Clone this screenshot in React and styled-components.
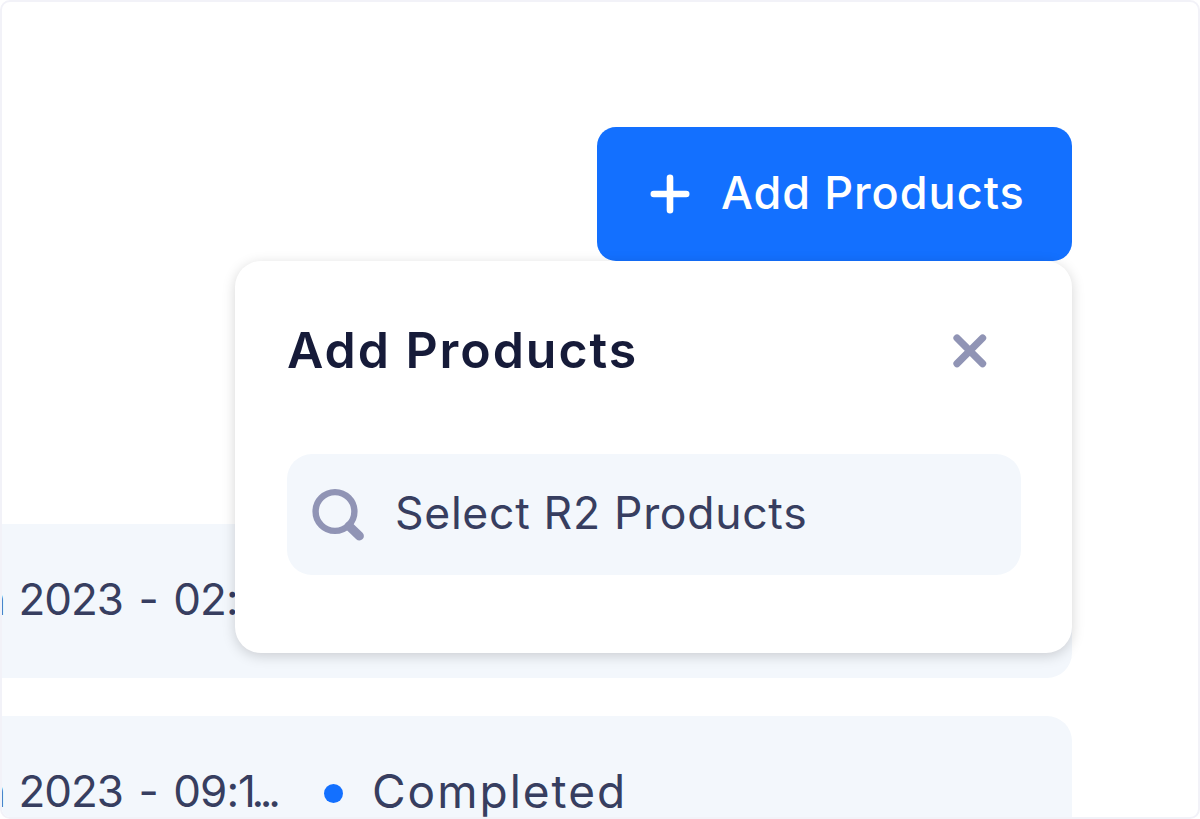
import React, { useState } from 'react'
import styled, { createGlobalStyle } from 'styled-components'

const App = () => {
  // HOOKS
  const [open, setOpen] = useState(true)

  // RETURN
  return (
    <Frame>
      <GlobalStyle />
      <Toolbar>
        <Anchor>
          <AddButton type="button" onClick={() => setOpen(!open)}>
            <svg width="40" height="40" viewBox="0 0 40 40" fill="none">
              <path d="M20 3.8V36.2M3.8 20H36.2" stroke="#fff" strokeWidth="6.6" strokeLinecap="round" />
            </svg>
            <ButtonText>Add Products</ButtonText>
          </AddButton>
          {open && (
            <Popover>
              <PopoverHeader>
                <Title>Add Products</Title>
                <CloseButton type="button" aria-label="Close" onClick={() => setOpen(false)}>
                  <svg width="34" height="34" viewBox="0 0 34 34" fill="none">
                    <path d="M4 4L29.6 29.6M29.6 4L4 29.6" stroke="#9094b5" strokeWidth="7.2" strokeLinecap="round" />
                  </svg>
                </CloseButton>
              </PopoverHeader>
              <SearchField>
                <svg width="54" height="54" viewBox="0 0 54 54" fill="none">
                  <circle cx="24" cy="23.5" r="19.4" stroke="#9094b5" strokeWidth="6.4" />
                  <path d="M38 38L48.4 48" stroke="#9094b5" strokeWidth="9" strokeLinecap="round" />
                </svg>
                <Placeholder>Select R2 Products</Placeholder>
              </SearchField>
            </Popover>
          )}
        </Anchor>
      </Toolbar>
      <List>
        <Row>
          <DateCell><Month>n </Month>2023 - 02:</DateCell>
        </Row>
        <Row>
          <DateCell><Month>n </Month>2023 - 09:<Cut>1...</Cut></DateCell>
          <Dot />
          <Status>Completed</Status>
        </Row>
      </List>
    </Frame>
  )
}

const GlobalStyle = createGlobalStyle`
  * {
    box-sizing: border-box;
  }
  body {
    margin: 0;
    background: #fff;
    font-family: 'Inter', sans-serif;
  }
`
const Frame = styled.main`
  width: 1200px;
  height: 819px;
  border: 2px solid #f2f2f8;
  border-radius: 10px;
  background: #fff;
  overflow: hidden;
`
const Toolbar = styled.header`
  display: flex;
  justify-content: flex-end;
  align-items: flex-start;
  height: 522px;
  padding: 125px 126px 0 0;
`
const Anchor = styled.div`
  position: relative;
`
const AddButton = styled.button`
  display: flex;
  align-items: center;
  width: 475px;
  height: 134px;
  padding: 0 0 0 53px;
  border: 0;
  border-radius: 19px;
  background: #1370ff;
  color: #fff;
  font-family: inherit;
  cursor: pointer;
`
const ButtonText = styled.span`
  margin-left: 31px;
  padding-bottom: 4px;
  font-size: 45px;
  font-weight: 500;
  letter-spacing: 1px;
  white-space: nowrap;
`
const Popover = styled.section`
  position: absolute;
  top: 100%;
  right: 0;
  z-index: 1;
  width: 837px;
  height: 392px;
  padding: 56px 51px 0 52px;
  border-radius: 26px;
  background: #fff;
  box-shadow: 0 3px 13px rgba(0, 0, 0, 0.17);
`
const PopoverHeader = styled.div`
  display: flex;
  justify-content: space-between;
  align-items: center;
  height: 68px;
  padding-right: 34px;
`
const Title = styled.h2`
  margin: 0;
  padding-bottom: 2px;
  color: #161b39;
  font-size: 50px;
  font-weight: 600;
  letter-spacing: 1.95px;
  line-height: 66px;
`
const CloseButton = styled.button`
  display: flex;
  padding: 0;
  border: 0;
  background: none;
  cursor: pointer;
`
const SearchField = styled.div`
  display: flex;
  align-items: center;
  height: 121px;
  margin-top: 69px;
  padding-left: 24px;
  border-radius: 25px;
  background: #f3f7fc;
`
const Placeholder = styled.span`
  margin-left: 30px;
  padding-bottom: 4px;
  color: #373e60;
  font-size: 44.5px;
  font-weight: 400;
  letter-spacing: 0.7px;
  white-space: nowrap;
`
const List = styled.div`
  display: flex;
  flex-direction: column;
  gap: 38px;
  margin-left: -40px;
  padding-right: 126px;
`
const Row = styled.div`
  display: flex;
  align-items: center;
  height: 154px;
  padding-left: 18px;
  border-radius: 25px;
  background: #f3f7fc;
  color: #373e60;
  font-size: 44px;
  font-weight: 400;
  white-space: nowrap;
`
const DateCell = styled.div`
  width: 344px;
  padding-bottom: 5px;
  letter-spacing: -1px;
  word-spacing: 4.2px;
`
const Month = styled.span`
  letter-spacing: 0;
  word-spacing: 0;
`
const Cut = styled.span`
  letter-spacing: -4.4px;
`
const Dot = styled.span`
  width: 19px;
  height: 19px;
  border-radius: 50%;
  background: #1370ff;
`
const Status = styled.span`
  margin-left: 29px;
  padding-bottom: 4px;
  font-size: 46px;
  letter-spacing: 2px;
`

export default App
